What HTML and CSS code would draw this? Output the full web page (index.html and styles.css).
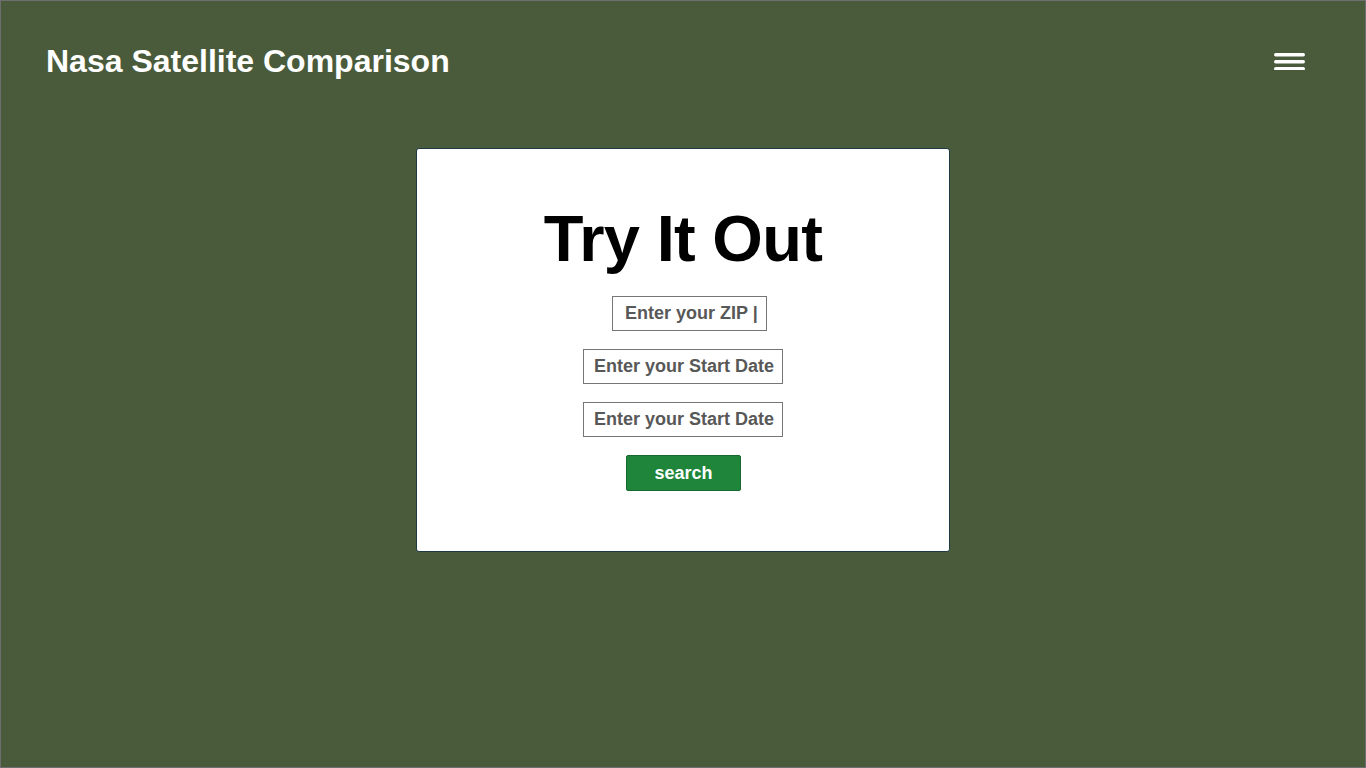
FILE: index.html
```html
<!DOCTYPE html>
<html lang="en">
<head>
<meta charset="utf-8">
<title>Nasa Satellite Comparison</title>
<link rel="stylesheet" href="styles.css">
</head>
<body>
<div class="page">
  <header class="topbar">
    <h2 class="brand">Nasa Satellite Comparison</h2>
    <button class="menu" aria-label="Menu">
      <svg width="31" height="17" viewBox="0 0 31 17"><rect x="0" y="0" width="31" height="3.4" rx="1.7" fill="#fff"/><rect x="0" y="7" width="31" height="3.4" rx="1.7" fill="#fff"/><rect x="0" y="14" width="31" height="3.4" rx="1.7" fill="#fff"/></svg>
    </button>
  </header>
  <main class="main">
    <section class="card">
      <h1 class="title">Try It Out</h1>
      <form class="form">
        <div class="field field-zip">Enter your ZIP |</div>
        <div class="field field-date">Enter your Start Date</div>
        <div class="field field-date">Enter your Start Date</div>
        <button type="button" class="search">search</button>
      </form>
    </section>
  </main>
</div>
</body>
</html>
```

FILE: styles.css
```css
* { box-sizing: border-box; }
html, body { margin: 0; padding: 0; height: 100%; }
body {
  font-family: "Liberation Sans", Arial, Helvetica, sans-serif;
  background: #4a5b3b;
}
.page {
  height: 768px;
  border: 1px solid #6e6e6e;
  background: #4a5b3b;
  display: flex;
  flex-direction: column;
}
.topbar {
  height: 120px;
  display: flex;
  align-items: center;
  justify-content: space-between;
  padding: 0 60px 0 45px;
}
.brand {
  margin: 0;
  color: #fff;
  font-size: 32px;
  font-weight: 700;
  line-height: 1;
}
.menu {
  background: none;
  border: 0;
  padding: 0;
  display: flex;
  cursor: pointer;
}
.main {
  display: flex;
  justify-content: center;
  padding-top: 27px;
}
.card {
  width: 534px;
  height: 404px;
  background: #fff;
  border: 1px solid #1d3a45;
  border-radius: 3px;
  padding: 57px 0 0;
  display: flex;
  flex-direction: column;
  align-items: center;
}
.title {
  margin: 0 0 25px;
  font-size: 65px;
  line-height: 1;
  font-weight: 700;
  color: #000;
  letter-spacing: -0.7px;
}
.form {
  display: flex;
  flex-direction: column;
  align-items: center;
  gap: 18px;
}
.field {
  height: 35px;
  border: 1px solid #767676;
  display: flex;
  align-items: center;
  color: #585858;
  font-size: 18px;
  font-weight: 700;
  white-space: nowrap;
}
.field-zip { width: 155px; padding-left: 12px; margin-left: 13px; }
.field-date { width: 200px; padding-left: 10px; }
.search {
  width: 115px;
  height: 36px;
  margin-left: 1px;
  background: #1e853a;
  border: 1px solid #17692d;
  border-radius: 2px;
  color: #fff;
  font-family: inherit;
  font-size: 18px;
  font-weight: 700;
  padding: 0;
}
```
